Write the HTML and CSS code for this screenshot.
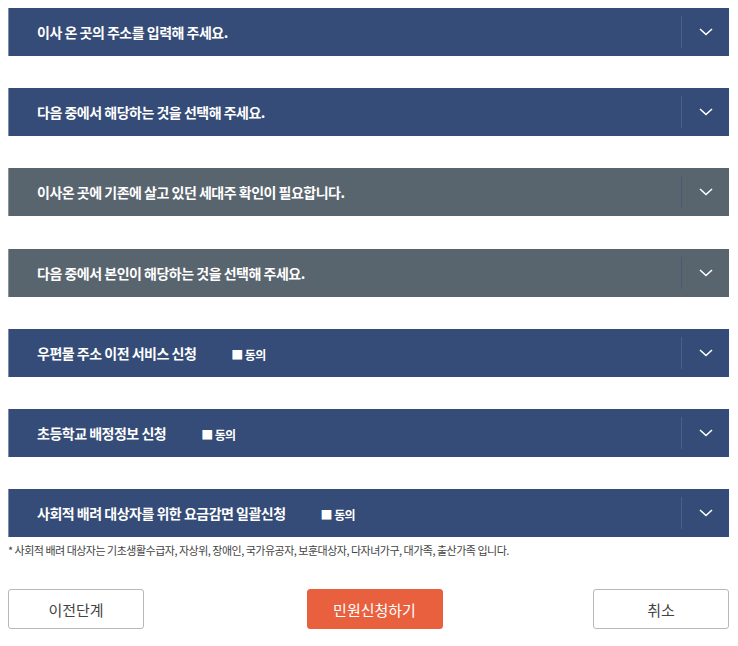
FILE: index.html
```html
<!DOCTYPE html>
<html>
<head>
    <title>전입신고</title>
    <link rel="stylesheet" href="styles.css">
</head>
<body>
    <div class="container">
        <div class="step blue">
            <span class="title">이사 온 곳의 주소를 입력해 주세요.</span>
            <span class="toggle"><svg width="14" height="8" viewBox="0 0 14 8"><path d="M1 1l6 5.5L13 1" fill="none" stroke="#fff" stroke-width="1.6"/></svg></span>
        </div>
        <div class="step blue">
            <span class="title">다음 중에서 해당하는 것을 선택해 주세요.</span>
            <span class="toggle"><svg width="14" height="8" viewBox="0 0 14 8"><path d="M1 1l6 5.5L13 1" fill="none" stroke="#fff" stroke-width="1.6"/></svg></span>
        </div>
        <div class="step gray">
            <span class="title">이사온 곳에 기존에 살고 있던 세대주 확인이 필요합니다.</span>
            <span class="toggle"><svg width="14" height="8" viewBox="0 0 14 8"><path d="M1 1l6 5.5L13 1" fill="none" stroke="#fff" stroke-width="1.6"/></svg></span>
        </div>
        <div class="step gray">
            <span class="title">다음 중에서 본인이 해당하는 것을 선택해 주세요.</span>
            <span class="toggle"><svg width="14" height="8" viewBox="0 0 14 8"><path d="M1 1l6 5.5L13 1" fill="none" stroke="#fff" stroke-width="1.6"/></svg></span>
        </div>
        <div class="step blue">
            <span class="title">우편물 주소 이전 서비스 신청</span>
            <span class="agree">■ 동의</span>
            <span class="toggle"><svg width="14" height="8" viewBox="0 0 14 8"><path d="M1 1l6 5.5L13 1" fill="none" stroke="#fff" stroke-width="1.6"/></svg></span>
        </div>
        <div class="step blue">
            <span class="title">초등학교 배정정보 신청</span>
            <span class="agree">■ 동의</span>
            <span class="toggle"><svg width="14" height="8" viewBox="0 0 14 8"><path d="M1 1l6 5.5L13 1" fill="none" stroke="#fff" stroke-width="1.6"/></svg></span>
        </div>
        <div class="step blue last">
            <span class="title">사회적 배려 대상자를 위한 요금감면 일괄신청</span>
            <span class="agree">■ 동의</span>
            <span class="toggle"><svg width="14" height="8" viewBox="0 0 14 8"><path d="M1 1l6 5.5L13 1" fill="none" stroke="#fff" stroke-width="1.6"/></svg></span>
        </div>
        <p class="note">* 사회적 배려 대상자는 기초생활수급자, 자상위, 장애인, 국가유공자, 보훈대상자, 다자녀가구, 대가족, 출산가족 입니다.</p>

        <div class="buttons">
            <button type="button" class="btn">이전단계</button>
            <button type="button" class="btn primary">민원신청하기</button>
            <button type="button" class="btn">취소</button>
        </div>
    </div>
</body>
</html>
```

FILE: styles.css
```css
body {
    font-family: "Noto Sans CJK KR", "Noto Sans", sans-serif;
    background-color: #ffffff;
    margin: 0;
    padding: 8px;
    color: #333333;
}

.container {
    width: 721px;
}

.step {
    display: flex;
    align-items: center;
    height: 48px;
    margin-bottom: 32.2px;
    padding-left: 28px;
    border-left: 1px solid #7f8fab;
    box-sizing: border-box;
    color: #ffffff;
}

.step.blue {
    background-color: #344c77;
}

.step.gray {
    background-color: #59656e;
    border-left-color: #8a949b;
}

.step.last {
    margin-bottom: 6px;
}

.title {
    font-size: 14px;
    font-weight: 700;
    letter-spacing: -0.5px;
}

.agree {
    margin-left: 35px;
    margin-top: 3px;
    font-size: 12px;
    font-weight: 700;
    letter-spacing: -0.6px;
}

.toggle {
    margin-left: auto;
    width: 47px;
    height: 32px;
    display: flex;
    align-items: center;
    justify-content: center;
    border-left: 1px solid #4a6190;
}

.step.gray .toggle {
    border-left-color: #45597a;
}

.note {
    margin: 0;
    font-size: 11px;
    line-height: 14px;
    letter-spacing: -0.5px;
    color: #444444;
}

.buttons {
    display: flex;
    justify-content: space-between;
    margin-top: 32px;
}

.btn {
    width: 136px;
    height: 40px;
    font-family: "Noto Sans CJK KR", sans-serif;
    font-size: 15px;
    color: #444444;
    background-color: #ffffff;
    border: 1px solid #b8b8b8;
    border-radius: 3px;
    padding: 0;
}

.btn.primary {
    background-color: #e9603f;
    border-color: #e9603f;
    color: #ffffff;
    margin-left: 12px;
}
```
